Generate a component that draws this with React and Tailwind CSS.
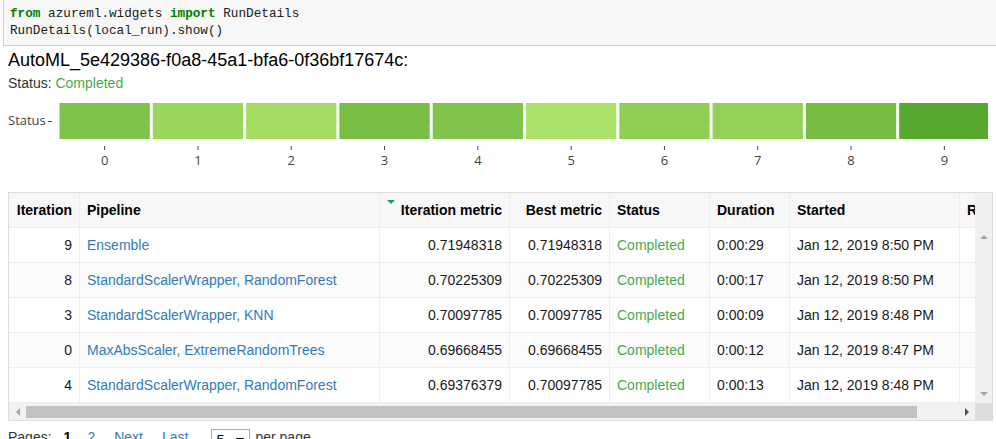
const BARS = ['#7dc24a', '#9ad65b', '#a4dc62', '#78bd44', '#81c44c', '#abe36a', '#90cf56', '#93d157', '#77bd43', '#57a82f']

const COLS = [
  { key: 'iter', label: 'Iteration', w: 'w-[71px]', align: 'text-right justify-end' },
  { key: 'pipe', label: 'Pipeline', w: 'w-[300px]', align: 'justify-start' },
  { key: 'im', label: 'Iteration metric', w: 'w-[130px]', align: 'text-right justify-end', sorted: true },
  { key: 'bm', label: 'Best metric', w: 'w-[100px]', align: 'text-right justify-end' },
  { key: 'status', label: 'Status', w: 'w-[100px]', align: 'justify-start' },
  { key: 'dur', label: 'Duration', w: 'w-[80px]', align: 'justify-start' },
  { key: 'started', label: 'Started', w: 'w-[170px]', align: 'justify-start' },
  { key: 'runid', label: 'Run ID', w: 'w-[140px]', align: 'justify-start' },
]

const ROWS = [
  { iter: 9, pipe: 'Ensemble', im: '0.71948318', bm: '0.71948318', dur: '0:00:29', started: 'Jan 12, 2019 8:50 PM' },
  { iter: 8, pipe: 'StandardScalerWrapper, RandomForest', im: '0.70225309', bm: '0.70225309', dur: '0:00:17', started: 'Jan 12, 2019 8:50 PM' },
  { iter: 3, pipe: 'StandardScalerWrapper, KNN', im: '0.70097785', bm: '0.70097785', dur: '0:00:09', started: 'Jan 12, 2019 8:48 PM' },
  { iter: 0, pipe: 'MaxAbsScaler, ExtremeRandomTrees', im: '0.69668455', bm: '0.69668455', dur: '0:00:12', started: 'Jan 12, 2019 8:47 PM' },
  { iter: 4, pipe: 'StandardScalerWrapper, RandomForest', im: '0.69376379', bm: '0.70097785', dur: '0:00:13', started: 'Jan 12, 2019 8:48 PM' },
]

function StatusChart() {
  const step = 933 / 10
  return (
    <div className="flex mt-[8px]">
      <div className="w-[51px] h-[42px] flex items-center text-[13px] text-[#444] font-['Open_Sans',sans-serif]">
        <span>Status</span>
        <span className="ml-[2px] w-[4px] h-px bg-[#444]" />
      </div>
      <svg width="933" height="68" className="block">
        <line x1="0" x2="933" y1="21" y2="21" stroke="#eee" strokeWidth="1" />
        {BARS.map((c, i) => (
          <g key={i}>
            <rect x={i * step + 0.5} y="3" width={step - 3} height="36" fill={c} />
            <line x1={i * step + step / 2 - 1} x2={i * step + step / 2 - 1} y1="46" y2="50" stroke="#444" strokeWidth="1" />
            <text x={i * step + step / 2 - 1} y="65" textAnchor="middle" fontSize="13" fill="#444" fontFamily="'Open Sans', sans-serif">{i}</text>
          </g>
        ))}
      </svg>
    </div>
  )
}

function Cell({ col, children, className = '' }) {
  return (
    <div className={`${col.w} shrink-0 h-full border-r border-[#eee] px-[7px] flex items-center whitespace-nowrap ${col.align} ${className}`}>
      {children}
    </div>
  )
}

function RunTable() {
  return (
    <div className="mt-[24px] w-[985px] border border-[#ddd] text-[14px]">
      <div className="flex">
        <div className="w-[966px] overflow-hidden">
          {/* header */}
          <div className="flex h-[35px] border-b border-[#eee] bg-[#f7f7f7] font-bold text-black">
            {COLS.map(col => (
              <Cell key={col.key} col={col} className="relative">
                {col.sorted && (
                  <span className="absolute left-[7px] top-[7px] w-0 h-0 border-l-[4px] border-r-[4px] border-t-[4px] border-l-transparent border-r-transparent border-t-[#1e9e5e]" />
                )}
                {col.label}
              </Cell>
            ))}
          </div>
          {ROWS.map((r, i) => (
            <div key={i} className={`flex h-[35px] border-b border-[#eee] text-[#1a1a1a] ${i % 2 === 1 ? 'bg-[#fbfbfb]' : 'bg-white'}`}>
              <Cell col={COLS[0]}>{r.iter}</Cell>
              <Cell col={COLS[1]}><span className="text-[#337ab7]">{r.pipe}</span></Cell>
              <Cell col={COLS[2]}>{r.im}</Cell>
              <Cell col={COLS[3]}>{r.bm}</Cell>
              <Cell col={COLS[4]}><span className="text-[#47a84f]">Completed</span></Cell>
              <Cell col={COLS[5]}>{r.dur}</Cell>
              <Cell col={COLS[6]}>{r.started}</Cell>
              <Cell col={COLS[7]}>{''}</Cell>
            </div>
          ))}
        </div>
        {/* vertical scrollbar */}
        <div className="w-[17px] bg-[#f0f0f0] flex flex-col">
          <div className="h-[35px]" />
          <div className="flex justify-center pt-[7px]">
            <span className="w-0 h-0 border-l-[4px] border-r-[4px] border-b-[4px] border-l-transparent border-r-transparent border-b-[#a3a3a3]" />
          </div>
          <div className="flex-1" />
          <div className="flex justify-center pb-[7px]">
            <span className="w-0 h-0 border-l-[4px] border-r-[4px] border-t-[4px] border-l-transparent border-r-transparent border-t-[#a3a3a3]" />
          </div>
        </div>
      </div>
      {/* horizontal scrollbar */}
      <div className="flex h-[17px]">
        <div className="w-[966px] bg-[#f1f1f1] flex items-center">
          <div className="w-[17px] flex justify-center">
            <span className="w-0 h-0 border-t-[4px] border-b-[4px] border-r-[4px] border-t-transparent border-b-transparent border-r-[#a3a3a3]" />
          </div>
          <div className="w-[891px] h-[12px] bg-[#c1c1c1]" />
          <div className="flex-1" />
          <div className="w-[17px] flex justify-center">
            <span className="w-0 h-0 border-t-[4px] border-b-[4px] border-l-[4px] border-t-transparent border-b-transparent border-l-[#505050]" />
          </div>
        </div>
        <div className="w-[17px] bg-[#dcdcdc]" />
      </div>
    </div>
  )
}

export default function App() {
  return (
    <div className="h-[439px] w-[996px] overflow-hidden bg-white font-['Liberation_Sans',Arial,sans-serif] text-[#000]">
      {/* code cell */}
      <div className="-mt-px ml-[3px] border border-r-0 border-[#cfcfcf] bg-[#f7f7f7] pt-[5px] pb-[6px] pl-[6px] font-['Liberation_Mono',monospace] text-[12.7px] leading-[17px] text-[#212121]">
        <div><span className="text-[#008000] font-bold">from</span> azureml.widgets <span className="text-[#008000] font-bold">import</span> RunDetails</div>
        <div>RunDetails(local_run).show()</div>
      </div>

      <div className="px-[8px]">
        <div className="mt-[3px] text-[18px] leading-[22px]">AutoML_5e429386-f0a8-45a1-bfa6-0f36bf17674c:</div>
        <div className="mt-[4px] text-[14px] leading-[17px] text-[#333]">
          Status: <span className="text-[#47a84f]">Completed</span>
        </div>

        <StatusChart />
        <RunTable />

        {/* pagination */}
        <div className="mt-[6px] flex items-start h-[24px] text-[14px] leading-[20px] text-[#333]">
          <span>Pages:</span>
          <span className="ml-[12px] font-bold text-black">1</span>
          <span className="ml-[16px] text-[#337ab7]">2</span>
          <span className="ml-[19px] text-[#337ab7]">Next</span>
          <span className="ml-[19px] text-[#337ab7]">Last</span>
          <div className="ml-[23px] mt-[2px] w-[39px] h-[22px] border border-[#aaa] flex items-center pl-[4px] text-black">
            <span>5</span>
            <span className="ml-[12px] w-0 h-0 border-l-[4px] border-r-[4px] border-t-[5px] border-l-transparent border-r-transparent border-t-black" />
          </div>
          <span className="ml-[5px]">per page</span>
        </div>
      </div>
    </div>
  )
}
